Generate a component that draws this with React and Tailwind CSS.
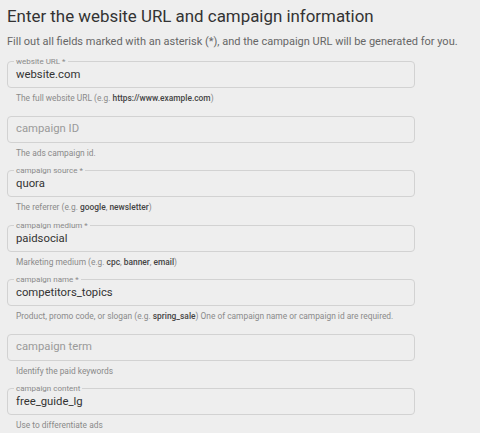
import React from 'react';

const fields = [
  { label: 'website URL *', value: 'website.com', help: <>The full website URL (e.g. <b>https://www.example.com</b>)</> },
  { placeholder: 'campaign ID', help: <>The ads campaign id.</> },
  { label: 'campaign source *', value: 'quora', help: <>The referrer (e.g. <b>google</b>, <b>newsletter</b>)</> },
  { label: 'campaign medium *', value: 'paidsocial', help: <>Marketing medium (e.g. <b>cpc</b>, <b>banner</b>, <b>email</b>)</> },
  { label: 'campaign name *', value: 'competitors_topics', help: <>Product, promo code, or slogan (e.g. <b>spring_sale</b>) One of campaign name or campaign id are required.</> },
  { placeholder: 'campaign term', help: <>Identify the paid keywords</> },
  { label: 'campaign content', value: 'free_guide_lg', help: <>Use to differentiate ads</> },
];

const Field = ({ label, value, placeholder, help }) => (
  <div className="flex flex-col h-[54.5px]">
    <div className="relative h-[27px] w-[408px] border border-[#d2d2d2] rounded-[4px] flex items-center px-[8px]">
      {label && (
        <span className="absolute left-[6px] -top-[6px] px-[2px] bg-[#eeeeee] text-[8px] leading-[11px] text-[#8a8a8a] whitespace-nowrap">
          {label}
        </span>
      )}
      {value ? (
        <span className={`text-[11.3px] text-[#333] ${label ? 'mt-[2px]' : ''}`}>{value}</span>
      ) : (
        <span className="text-[11.3px] text-[#9a9a9a]">{placeholder}</span>
      )}
    </div>
    <p className="pl-[9px] pt-[5px] text-[8.4px] leading-[10px] text-[#8a8a8a] whitespace-nowrap [&_b]:text-[#444] [&_b]:font-medium">
      {help}
    </p>
  </div>
);

export default function App() {
  return (
    <div className="w-[480px] h-[433px] bg-[#eeeeee] overflow-hidden px-[7px] pt-[4px]" style={{ fontFamily: 'Roboto, sans-serif' }}>
      <h1 className="text-[16.9px] leading-[24px] text-[#333]">Enter the website URL and campaign information</h1>
      <p className="mt-[7px] text-[11px] leading-[14px] text-[#666] whitespace-nowrap">
        Fill out all fields marked with an asterisk (*), and the campaign URL will be generated for you.
      </p>
      <div className="mt-[12px] flex flex-col">
        {fields.map((f, i) => (
          <Field key={i} {...f} />
        ))}
      </div>
    </div>
  );
}
